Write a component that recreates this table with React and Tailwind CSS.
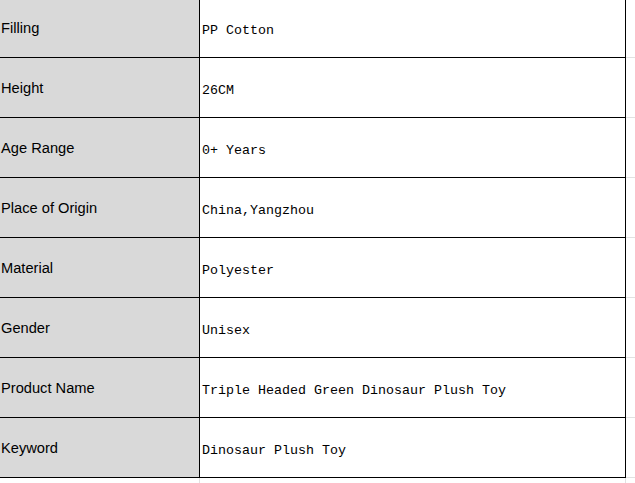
const rows = [
  ['Filling', 'PP Cotton'],
  ['Height', '26CM'],
  ['Age Range', '0+ Years'],
  ['Place of Origin', 'China,Yangzhou'],
  ['Material', 'Polyester'],
  ['Gender', 'Unisex'],
  ['Product Name', 'Triple Headed Green Dinosaur Plush Toy'],
  ['Keyword', 'Dinosaur Plush Toy'],
]

export default function App() {
  return (
    <div className="w-[635px] h-[483px] overflow-hidden bg-white">
      <div className="-mt-[2px] flex flex-col">
        {rows.map(([label, value]) => (
          <div key={label} className="flex h-[60px]">
            <div className="flex w-[626px] border-b border-black">
              <div
                className="w-[199px] bg-[#d9d9d9] flex items-center pl-px text-[14.67px] text-black"
                style={{ fontFamily: '"Liberation Sans", Arial, sans-serif' }}
              >
                {label}
              </div>
              <div
                className="flex-1 border-x border-black flex items-center pl-[2px] pt-[6px] text-[13.33px] text-black"
                style={{ fontFamily: '"Liberation Mono", "Courier New", monospace' }}
              >
                {value}
              </div>
            </div>
            <div className="flex-1 border-b border-[#e1e1e1]" />
          </div>
        ))}
        <div className="flex h-[20px]">
          <div className="w-[200px] border-r border-[#e1e1e1]" />
          <div className="w-[426px] border-r border-[#e1e1e1]" />
        </div>
      </div>
    </div>
  )
}
